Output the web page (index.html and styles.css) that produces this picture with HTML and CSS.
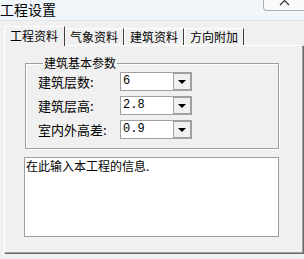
FILE: index.html
```html
<!DOCTYPE html>
<html>
    <head>
        <meta charset="utf-8" />
        <title>工程设置</title>
        <link rel="stylesheet" href="styles.css">
    </head>
    <body>
        <div class="window">
            <div class="titlebar">
                <span class="title">工程设置</span>
                <div class="close">
                    <svg width="11" height="11" viewBox="0 0 11 11">
                        <path d="M1 1 L10 10 M10 1 L1 10" stroke="#333" stroke-width="1.2" fill="none" />
                    </svg>
                </div>
            </div>
            <div class="client">
                <div class="tabs">
                    <div class="tab active">工程资料</div>
                    <div class="tab">气象资料</div>
                    <div class="tab">建筑资料</div>
                    <div class="tab">方向附加</div>
                </div>
                <div class="panel">
                    <fieldset class="group">
                        <legend>建筑基本参数</legend>
                        <div class="row">
                            <label>建筑层数:</label>
                            <div class="combo"><span class="value">6</span><span class="drop"></span></div>
                        </div>
                        <div class="row">
                            <label>建筑层高:</label>
                            <div class="combo"><span class="value">2.8</span><span class="drop"></span></div>
                        </div>
                        <div class="row">
                            <label>室内外高差:</label>
                            <div class="combo"><span class="value">0.9</span><span class="drop"></span></div>
                        </div>
                    </fieldset>
                    <div class="memo">在此输入本工程的信息.</div>
                </div>
            </div>
        </div>
    </body>
</html>
```
FILE: styles.css
```css
html, body {
    margin: 0;
    padding: 0;
    width: 304px;
    height: 259px;
    overflow: hidden;
}
.window {
    display: flex;
    flex-direction: column;
    height: 259px;
    font-family: "Noto Sans CJK SC", "DejaVu Sans", sans-serif;
    color: #000;
}
.titlebar {
    display: flex;
    height: 20px;
    background: #f1f6fa;
    border-bottom: 1px solid #e2e7eb;
}
.title {
    font-size: 14px;
    line-height: 18px;
}
.close {
    margin-left: auto;
    width: 40px;
    height: 10px;
    border: 1px solid #a8b0b8;
    border-top: none;
    border-right: none;
    border-bottom-left-radius: 4px;
    background: #f8fafc;
    display: flex;
    justify-content: center;
    overflow: hidden;
}
.close svg {
    margin-top: -5px;
}
.client {
    flex: 1;
    background: #f0f0f0;
    padding: 5px 0 0 4px;
}
.tabs {
    display: flex;
    height: 19px;
    align-items: flex-end;
    padding-left: 2px;
}
.tab {
    font-size: 12px;
    line-height: 16px;
    height: 16px;
    padding: 0 5px;
    border-top: 1px solid #fff;
    border-left: 1px solid #fff;
    border-right: 1px solid #404040;
}
.tab.active {
    height: 19px;
    line-height: 18px;
    padding: 0 6px 0 5px;
    margin-left: -2px;
    margin-right: -1px;
    position: relative;
    z-index: 1;
    background: #f0f0f0;
    margin-bottom: -1px;
}
.panel {
    width: 297px;
    height: 206px;
    border-top: 1px solid #fff;
    border-left: 1px solid #fff;
    border-right: 1px solid #a0a0a0;
    border-bottom: 1px solid #a0a0a0;
    box-shadow: 1px 1px 0 #696969;
    display: flex;
    flex-direction: column;
}
.group {
    margin: 10px 23px 0 20px;
    padding: 2px 0 9px 12px;
    border: 1px solid #a0a0a0;
    box-shadow: inset 1px 1px 0 #fff, 1px 1px 0 #fff;
    display: flex;
    flex-direction: column;
    gap: 5px;
}
.group legend {
    font-size: 12px;
    line-height: 14px;
    padding: 0 1px;
    margin-left: 5px;
}
.row {
    display: flex;
    align-items: center;
    height: 19px;
}
.row label {
    width: 82px;
    font-size: 13px;
    line-height: 19px;
}
.combo {
    display: flex;
    width: 70px;
    height: 17px;
    border: 1px solid #a0a0a0;
    background: #fff;
}
.value {
    flex: 1;
    font-family: "Liberation Mono", monospace;
    font-size: 12px;
    line-height: 17px;
    padding-left: 2px;
}
.drop {
    width: 16px;
    height: 15px;
    border: 1px solid #a0a0a0;
    background: #f0f0f0;
    display: flex;
    align-items: center;
    justify-content: center;
}
.drop::after {
    content: "";
    border-left: 4px solid transparent;
    border-right: 4px solid transparent;
    border-top: 4px solid #000;
}
.memo {
    margin: 8px 23px 0 19px;
    height: 78px;
    border: 1px solid #a0a0a0;
    background: #fff;
    font-size: 12px;
    line-height: 16px;
    padding-left: 1px;
}
```
